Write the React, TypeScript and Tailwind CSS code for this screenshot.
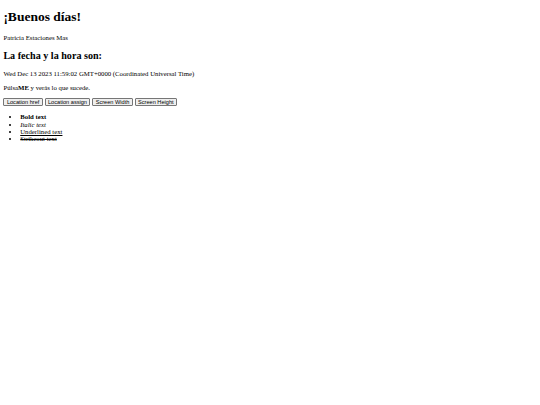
import React from "react";

const btn =
  "h-[8.6px] font-['Liberation_Sans',Arial,sans-serif] text-[5.625px] leading-[6.5px] text-black bg-[#efefef] border-[0.5px] border-solid border-[#767676] rounded-[1px] px-[2.5px] py-0 cursor-default align-top";

export default function App() {
  return (
    <div className="min-h-[405px] w-[540px] bg-white p-[3.375px] font-['Liberation_Serif','Times_New_Roman',serif] text-[6.75px] leading-[7.76px] text-black">
      <h1 className="text-[13.5px] font-bold leading-[15.5px] mt-[5.67px] mb-[9.045px]">¡Buenos días!</h1>
      <p className="my-[6.75px]">Patricia Estaciones Mas</p>
      <h2 className="text-[10.125px] font-bold leading-[11.64px] my-[8.4px]">La fecha y la hora son:</h2>
      <p className="my-[6.75px]">Wed Dec 13 2023 11:59:02 GMT+0000 (Coordinated Universal Time)</p>
      <p className="mt-[6.75px] mb-[5.6px]">
        Púlsa<b className="font-bold">ME</b> y verás lo que sucede.
      </p>
      <div className="flex gap-[1.7px]">
        <button className={btn}>Location href</button>
        <button className={btn}>Location assign</button>
        <button className={btn}>Screen Width</button>
        <button className={btn}>Screen Height</button>
      </div>
      <ul className="list-disc pl-[16.875px] mt-[7.2px] mb-[6.75px] leading-[7.2px]">
        <li className="font-bold">Bold text</li>
        <li className="italic">Italic text</li>
        <li className="underline">Underlined text</li>
        <li className="line-through">Strikeout text</li>
      </ul>
    </div>
  );
}
